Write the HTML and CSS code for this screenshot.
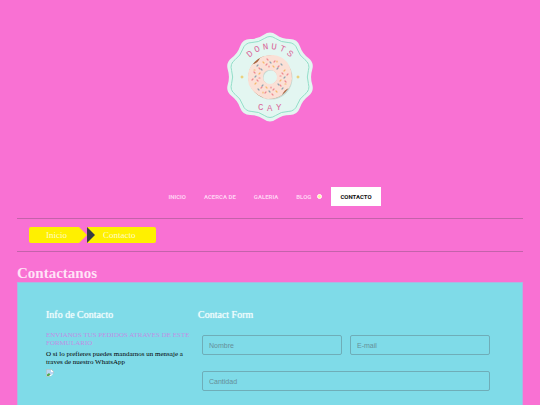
FILE: index.html
```html
<!DOCTYPE html>
<html lang="es">
<head>
    <meta charset="UTF-8">
    <meta name="viewport" content="width=device-width, initial-scale=1.0">
    <title>Contacto - Donuts Cay</title>
    <link rel="stylesheet" href="styles.css">
</head>
<body>
    <header>
        <a class="logo" href="#">
            <svg viewBox="-45 -46 90 92" role="img" aria-label="Donuts Cay">
                <defs>
                    <path id="borde" d="M-6.2-42.3Q0-46.7 6.2-42.3Q12.3-37.900 19.9-37.9Q27.4-37.8 29.9-30.7Q32.3-23.5 38.4-19Q44.4-14.4 42.2-7.2Q39.9 0 42.2 7.2Q44.4 14.4 38.4 19Q32.3 23.5 29.9 30.7Q27.4 37.8 19.9 37.9Q12.3 37.9 6.2 42.3Q0 46.7-6.2 42.3Q-12.3 37.9-19.9 37.9Q-27.4 37.8-29.9 30.7Q-32.3 23.5-38.4 19Q-44.4 14.4-42.2 7.2Q-39.9 0-42.2-7.2Q-44.4-14.4-38.4-19Q-32.3-23.5-29.9-30.7Q-27.4-37.8-19.9-37.9Q-12.3-37.9-6.2-42.3Z"/>
                    <path id="arco" d="M-28 0A28 28 0 0 1 28 0"/>
                    <g id="chispas" stroke-width="1.2" stroke-linecap="round">
                        <path stroke="#ee8a90" d="M-3-18l1 1M4-15l1-1M9-11l-1 1M-1-11v1M12-4l1 1"/>
                        <path stroke="#8fa3b0" d="M0-15l1 1M11-13l1 1M7-8l1-1"/>
                        <path stroke="#f6b96c" d="M7-16v1M3-11l1 1M15-7l-1 1"/>
                    </g>
                </defs>
                <use href="#borde" fill="#e3f6f1"/>
                <use href="#borde" fill="none" stroke="#8adcc4" stroke-width="1" transform="scale(.91)"/>
                <circle r="14.5" fill="none" stroke="#c5d8d2" stroke-width="14" cx="1" cy="1"/>
                <circle r="14.5" fill="none" stroke="#a8653f" stroke-width="14"/>
                <path fill="#fbe0d6" fill-rule="evenodd" d="M-10-19Q-6-22 3-22Q12-21 17-15Q22-8 22 2Q21 8 19 11Q14 13 12 18Q6 22-2 22Q-6 22-8 20Q-17 16-21 8Q-23 0-21-7Q-19-12-17-13Q-12-14-10-19ZM7 0A7 7 0 1 0-7 0A7 7 0 1 0 7 0Z"/>
                <use href="#chispas"/>
                <use href="#chispas" transform="rotate(90)"/>
                <use href="#chispas" transform="rotate(180)"/>
                <use href="#chispas" transform="rotate(270)"/>
                <path fill="#ecc65c" d="M-28-2l.7 1.5 1.5.5-1.5.5-.7 1.5-.7-1.5-1.5-.5 1.5-.5zM28-2l.7 1.5 1.5.5-1.5.5-.7 1.5-.7-1.5-1.5-.5 1.5-.5z"/>
                <text class="logo-texto" x="21 29 37 45 53 61"><textPath href="#arco">DONUTS</textPath></text>
                <text class="logo-texto" x="-12 -3 6" y="33 34 33">CAY</text>
            </svg>
        </a>
        <nav>
            <ul class="menu">
                <li><a href="#">Inicio</a></li>
                <li><a href="#">Acerca de</a></li>
                <li><a href="#">Galeria</a></li>
                <li><a href="#">Blog <span class="punto"></span></a></li>
                <li><a class="activo" href="#">Contacto</a></li>
            </ul>
        </nav>
    </header>

    <nav class="migas" aria-label="Ruta">
        <a class="miga primera" href="#">Inicio</a>
        <a class="miga ultima" href="#">Contacto</a>
    </nav>

    <main>
        <h1>Contactanos</h1>
        <div class="contacto">
            <section class="info">
                <h2>Info de Contacto</h2>
                <p class="aviso">ENVIANOS TUS PEDIDOS ATRAVES DE ESTE FORMULARIO</p>
                <p>O si lo prefieres puedes mandarnos un mensaje a traves de nuestro WhatsApp</p>
                <a href="#" aria-label="WhatsApp">
                    <svg class="imagen" viewBox="0 0 8 8">
                        <path fill="#fff" stroke="#a5b1b3" stroke-width=".6" d="M.5.5h5l2 2v5h-7z"/>
                        <path fill="#b9d5f4" d="M1 1h4v2h2v2L1 7z"/>
                        <path fill="#55a94b" d="M1 7V5.5L3 4l1.5 1.5L3 7z"/>
                        <path fill="#7fdbe8" d="M8 4L4 8h4z"/>
                    </svg>
                </a>
            </section>
            <section class="formulario">
                <h2>Contact Form</h2>
                <form>
                    <input type="text" name="nombre" placeholder="Nombre" aria-label="Nombre">
                    <input type="email" name="email" placeholder="E-mail" aria-label="E-mail">
                    <input class="ancho" type="text" name="cantidad" placeholder="Cantidad" aria-label="Cantidad">
                </form>
            </section>
        </div>
    </main>
</body>
</html>
```
FILE: styles.css
```css
* {
    box-sizing: border-box;
}
body {
    display: flex;
    flex-direction: column;
    min-height: 100vh;
    margin: 0;
    padding: 0 17px;
    background-color: #f971d3;
    font-family: "Liberation Serif", serif;
    font-size: 7px;
    line-height: 8px;
}
a {
    color: inherit;
    text-decoration: none;
}
h1, h2, p {
    margin: 0;
}
header {
    display: flex;
    flex-direction: column;
    align-items: center;
    gap: 64px;
    padding: 31px 0 12px;
}
.logo svg {
    display: block;
    width: 90px;
    height: 92px;
}
.logo-texto {
    font-family: "Liberation Mono", monospace;
    font-size: 9px;
    fill: #d9679a;
}
.menu {
    display: flex;
    margin: 0;
    padding: 0;
    list-style: none;
}
.menu a {
    display: flex;
    align-items: center;
    gap: 6px;
    height: 19px;
    padding: 0 9px;
    color: #ffd0f2;
    font-family: Roboto, sans-serif;
    font-size: 6px;
    font-weight: bold;
    text-transform: uppercase;
}
.menu .activo {
    background-color: #fff;
    color: #111;
}
.punto {
    width: 5px;
    height: 5px;
    border: 1px solid #fff;
    border-radius: 50%;
    background-color: #fff3a0;
}
.migas {
    display: flex;
    padding: 8px 12px;
    border-top: 1px solid #c462ab;
    border-bottom: 1px solid #c462ab;
}
.miga {
    display: flex;
    align-items: center;
    height: 16px;
    background-color: #fff000;
    color: #fffbc8;
    font-size: 9px;
}
.primera {
    padding: 0 20px 0 17px;
    border-radius: 2px 0 0 2px;
    clip-path: polygon(0 0, calc(100% - 8px) 0, 100% 50%, calc(100% - 8px) 100%, 0 100%);
}
.ultima {
    gap: 8px;
    padding-right: 20px;
    border-radius: 0 2px 2px 0;
}
.ultima::before {
    content: "";
    border: 8px solid transparent;
    border-left-color: #363a45;
    border-right-width: 0;
}
main {
    display: flex;
    flex: 1;
    flex-direction: column;
}
h1 {
    padding-top: 13px;
    color: #ffe3f7;
    font-size: 15px;
    line-height: 17px;
}
.contacto {
    display: grid;
    flex: 1;
    grid-template-columns: 146px 1fr;
    gap: 6px;
    padding: 26px 28px 14px;
    border: 1px solid #a9b8e2;
    border-bottom: 0;
    background-color: #7fdbe8;
}
h2 {
    color: #f0fcfd;
    font-size: 10px;
    font-weight: normal;
    line-height: 12px;
    text-shadow: 0 0 1px #f0fcfd;
}
.info h2 {
    margin-bottom: 10px;
}
.info p {
    margin-bottom: 3px;
}
.aviso {
    color: #c08fe6;
}
.imagen {
    display: block;
    width: 8px;
    height: 8px;
}
form {
    display: grid;
    grid-template-columns: 1fr 1fr;
    gap: 16px 8px;
    padding: 14px 4px 0;
}
input {
    width: 100%;
    height: 20px;
    padding: 0 6px;
    border: 1px solid #6fadb8;
    border-radius: 2px;
    background-color: transparent;
    font-family: "Liberation Sans", Arial, sans-serif;
    font-size: 7px;
}
input::placeholder {
    color: #658f99;
}
.ancho {
    grid-column: span 2;
}
```
